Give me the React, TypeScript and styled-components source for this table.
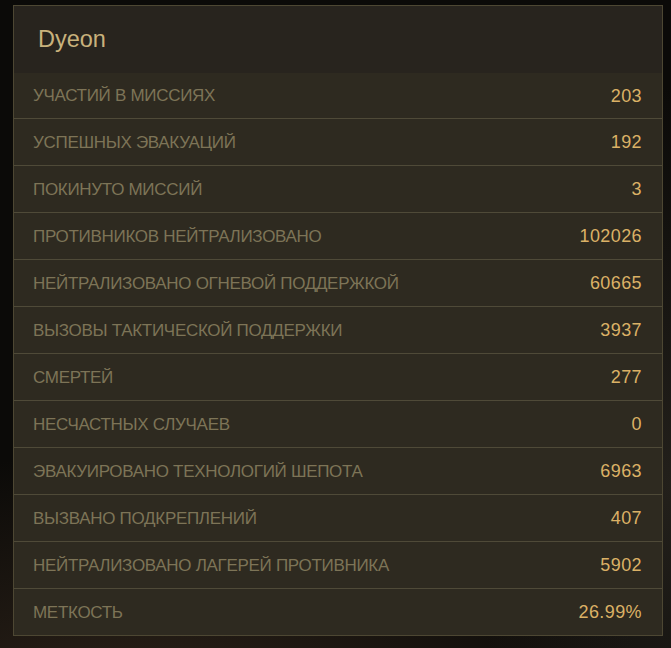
import * as React from 'react';
import styled, { createGlobalStyle } from 'styled-components';

const stats = [
  { label: 'УЧАСТИЙ В МИССИЯХ', value: '203' },
  { label: 'УСПЕШНЫХ ЭВАКУАЦИЙ', value: '192' },
  { label: 'ПОКИНУТО МИССИЙ', value: '3' },
  { label: 'ПРОТИВНИКОВ НЕЙТРАЛИЗОВАНО', value: '102026' },
  { label: 'НЕЙТРАЛИЗОВАНО ОГНЕВОЙ ПОДДЕРЖКОЙ', value: '60665' },
  { label: 'ВЫЗОВЫ ТАКТИЧЕСКОЙ ПОДДЕРЖКИ', value: '3937' },
  { label: 'СМЕРТЕЙ', value: '277' },
  { label: 'НЕСЧАСТНЫХ СЛУЧАЕВ', value: '0' },
  { label: 'ЭВАКУИРОВАНО ТЕХНОЛОГИЙ ШЕПОТА', value: '6963' },
  { label: 'ВЫЗВАНО ПОДКРЕПЛЕНИЙ', value: '407' },
  { label: 'НЕЙТРАЛИЗОВАНО ЛАГЕРЕЙ ПРОТИВНИКА', value: '5902' },
  { label: 'МЕТКОСТЬ', value: '26.99%' },
];

export default function App() {
  return (
    <>
      <GlobalStyle />
      <Page>
        <Panel>
          <Header>Dyeon</Header>
          {stats.map(stat => (
            <Row key={stat.label}>
              <Label>{stat.label}</Label>
              <Value>{stat.value}</Value>
            </Row>
          ))}
        </Panel>
      </Page>
    </>
  );
}

const GlobalStyle = createGlobalStyle`
  html, body {
    margin: 0;
    padding: 0;
    background: #0b0a08;
  }
  body {
    font-family: "Liberation Sans", Arial, sans-serif;
  }
`;

const Page = styled.div`
  width: 671px;
  height: 648px;
  box-sizing: border-box;
  padding: 5px 9px 0 13px;
  background:
    radial-gradient(ellipse 520px 260px at 20% 110%, #2c2219 0%, rgba(44, 34, 25, 0) 100%),
    radial-gradient(ellipse 200px 400px at 100% 75%, #23201b 0%, rgba(35, 32, 27, 0) 100%),
    #0b0a08;
`;

const Panel = styled.div`
  width: 650px;
  box-sizing: border-box;
  border: 1px solid #4d4733;
  background: #2e2a20;
`;

const Header = styled.div`
  height: 67px;
  display: flex;
  align-items: center;
  padding-left: 24px;
  background: #28241e;
  color: #c8b27c;
  font-size: 23.5px;
`;

const Row = styled.div`
  height: 47px;
  display: flex;
  align-items: center;
  justify-content: space-between;
  padding: 1px 20px 0 19px;
  box-sizing: border-box;
  border-top: 1px solid #4f4a38;

  &:nth-child(2) {
    border-top: none;
    height: 45px;
  }
`;

const Label = styled.span`
  color: #7d7457;
  font-size: 17px;
  letter-spacing: -0.3px;
`;

const Value = styled.span`
  color: #dbb166;
  font-size: 18px;
  letter-spacing: 0.4px;
`;
